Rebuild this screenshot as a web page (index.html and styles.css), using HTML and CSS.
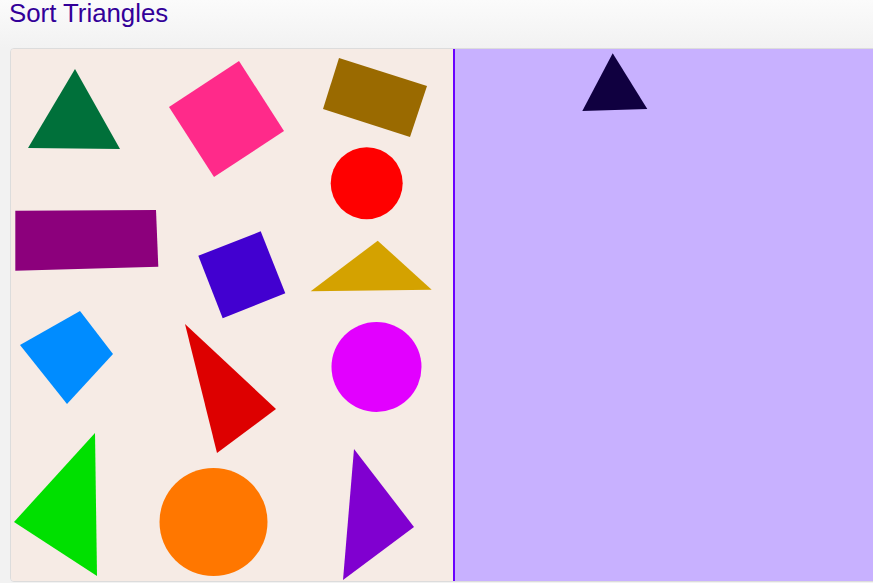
FILE: index.html
```html
<!DOCTYPE html>
<html>
<head>
<meta charset="utf-8">
<title>Sort Triangles</title>
<link rel="stylesheet" href="styles.css">
</head>
<body>
<header class="top">
  <h1 class="title">Sort Triangles</h1>
</header>
<main class="board">
  <section class="pane pane-source">
    <svg class="canvas" width="442" height="532" viewBox="11 49 442 532">
      <polygon fill="#00703a" points="75,69 120,149 28,148"/>
      <polygon fill="#ff2a8a" points="239,61 284,131 214,177 169,107"/>
      <polygon fill="#9a6a00" points="339,58 427,86 410,137 323,109"/>
      <circle fill="#ff0000" cx="366.7" cy="183.3" r="36"/>
      <polygon fill="#8c007c" points="15.3,210.7 156,210 158.3,266.7 15.3,270.7"/>
      <polygon fill="#4200d0" points="198.3,255.7 260.7,231.3 285.3,293.3 222.7,318.3"/>
      <polygon fill="#d4a200" points="377.7,240.7 431.7,289.7 310.7,291.3"/>
      <polygon fill="#008cff" points="20,345 80,311 113,354 67,404"/>
      <polygon fill="#dd0000" points="185,324 276,409 217,453"/>
      <circle fill="#e200ff" cx="376.5" cy="367" r="45"/>
      <polygon fill="#00e000" points="95,433 97,576 14,522"/>
      <circle fill="#ff7700" cx="213.5" cy="522" r="54"/>
      <polygon fill="#8000d0" points="354,449 414,527 343,580"/>
    </svg>
  </section>
  <div class="divider"></div>
  <section class="pane pane-target">
    <svg class="canvas" width="418" height="532" viewBox="455 49 418 532">
      <polygon fill="#100040" points="612.7,53.3 647.3,109 582.3,111"/>
    </svg>
  </section>
</main>
</body>
</html>
```

FILE: styles.css
```css
html, body {
  margin: 0;
  padding: 0;
}
body {
  width: 873px;
  height: 583px;
  overflow: hidden;
  background: linear-gradient(#fbfbfb, #f2f2f2 48px, #f2f2f2);
  font-family: "Liberation Sans", Arial, sans-serif;
}
.top {
  height: 48px;
  padding-left: 9px;
  box-sizing: border-box;
}
.title {
  margin: 0;
  font-size: 25.8px;
  font-weight: normal;
  line-height: 30px;
  color: #330099;
  position: relative;
  top: -2px;
}
.board {
  display: flex;
  margin-left: 10px;
  width: 900px;
  height: 534px;
  box-sizing: border-box;
  border: 1px solid #dcdcdc;
  border-radius: 4px 0 0 4px;
  overflow: hidden;
}
.pane {
  position: relative;
  height: 100%;
}
.pane-source {
  width: 442px;
  background: #f6ebe5;
}
.divider {
  width: 2px;
  background: #6a00ff;
}
.pane-target {
  flex: 1;
  background: #c8b1ff;
}
.canvas {
  display: block;
}
```
